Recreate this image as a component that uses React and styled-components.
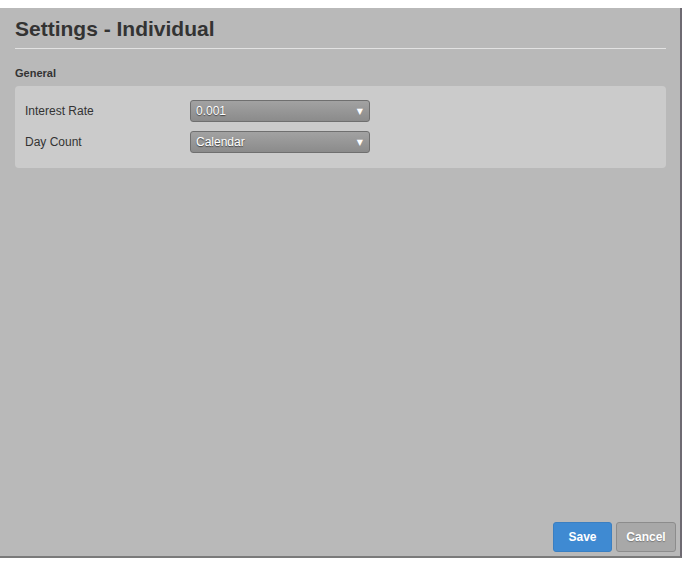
import { createGlobalStyle, styled } from 'styled-components';

const GlobalStyle = createGlobalStyle`
  html, body {
    margin: 0;
    padding: 0;
    background: #ffffff;
    font-family: 'Liberation Sans', Arial, sans-serif;
  }
`;

const Window = styled.div`
  margin-top: 8px;
  width: 682px;
  height: 550px;
  background-color: #b9b9b9;
  border-right: 2px solid #6e6a72;
  border-bottom: 2px solid #7a7a7a;
  display: flex;
  flex-direction: column;
  padding: 0 14px 4px 15px;
  box-sizing: border-box;
`;

const Title = styled.h2`
  margin: 0;
  padding: 9px 0 7px;
  font-size: 21px;
  font-weight: bold;
  color: #333333;
  border-bottom: 1px solid #e2e2e2;
`;

const SectionTitle = styled.h4`
  margin: 18px 0 0;
  font-size: 11px;
  font-weight: bold;
  color: #333333;
`;

const Card = styled.div`
  margin-top: 7px;
  background-color: #cbcbcb;
  border-radius: 4px;
  padding: 14px 10px 15px;
  display: flex;
  flex-direction: column;
  gap: 9px;
`;

const Row = styled.div`
  display: flex;
  align-items: center;
`;

const Label = styled.span`
  width: 165px;
  font-size: 12px;
  color: #333333;
`;

const Select = styled.div`
  width: 180px;
  height: 22px;
  box-sizing: border-box;
  border: 1px solid #6f6f6f;
  border-radius: 3px;
  background: linear-gradient(#a2a2a2, #8b8b8b);
  display: flex;
  align-items: center;
  justify-content: space-between;
  padding: 0 6px 0 5px;
  color: #ffffff;
  font-size: 12px;
  text-shadow: 0 1px 1px #444;

  span.arrow {
    font-family: 'DejaVu Sans', sans-serif;
    font-size: 8px;
    text-shadow: none;
  }
`;

const Spacer = styled.div`
  flex: 1;
`;

const Footer = styled.div`
  display: flex;
  justify-content: flex-end;
  gap: 4px;
  margin-right: -10px;
`;

const Button = styled.button`
  width: ${(p) => (p.$primary ? '59px' : '60px')};
  height: 30px;
  border-radius: 3px;
  border: 1px solid ${(p) => (p.$primary ? '#3a7fc2' : '#8c8c8c')};
  background-color: ${(p) => (p.$primary ? '#3f8ad2' : '#a8a8a8')};
  color: #ffffff;
  font-family: 'Liberation Sans', Arial, sans-serif;
  font-size: 12px;
  font-weight: bold;
  padding: 0;
  text-shadow: ${(p) => (p.$primary ? 'none' : '0 1px 1px #777')};
`;

function App() {
  return (
    <>
      <GlobalStyle />
      <Window>
        <Title>Settings - Individual</Title>
        <SectionTitle>General</SectionTitle>
        <Card>
          <Row>
            <Label>Interest Rate</Label>
            <Select>
              <span>0.001</span>
              <span className="arrow">▼</span>
            </Select>
          </Row>
          <Row>
            <Label>Day Count</Label>
            <Select>
              <span>Calendar</span>
              <span className="arrow">▼</span>
            </Select>
          </Row>
        </Card>
        <Spacer />
        <Footer>
          <Button $primary>Save</Button>
          <Button>Cancel</Button>
        </Footer>
      </Window>
    </>
  );
}

export default App;
